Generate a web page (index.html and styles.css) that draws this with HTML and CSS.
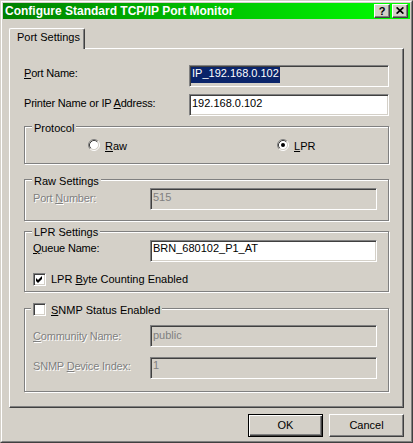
FILE: index.html
```html
<!DOCTYPE html>
<html>
<head>
<meta charset="utf-8">
<title>Configure Standard TCP/IP Port Monitor</title>
<link rel="stylesheet" href="styles.css">
</head>
<body>
<div class="window">
  <div class="frame">
    <div class="titlebar">
      <span class="title">Configure Standard TCP/IP Port Monitor</span>
      <div class="caption-buttons">
        <span class="cap-btn help">?</span>
        <span class="cap-btn close"><svg width="8" height="7" viewBox="0 0 8 7"><path d="M0.6 0.4 L7.4 6.6 M7.4 0.4 L0.6 6.6" stroke="#000" stroke-width="1.7" fill="none"/></svg></span>
      </div>
    </div>
    <div class="client">
      <div class="tabs">
        <div class="tab selected">Port Settings</div>
      </div>
      <div class="sheet">
        <div class="row r-port">
          <span class="lbl main p2"><u>P</u>ort Name:</span>
          <div class="edit wide readonly"><span class="sel">IP_192.168.0.102</span></div>
        </div>
        <div class="row r-printer">
          <span class="lbl main p3">Printer Name or IP <u>A</u>ddress:</span>
          <div class="edit wide t2">192.168.0.102</div>
        </div>

        <div class="group g-protocol">
          <span class="legend">Protocol</span>
          <div class="radios">
            <div class="radio-item first">
              <svg class="radio" width="12" height="12" viewBox="0 0 12 12">
                <circle cx="6" cy="6" r="4.5" fill="#fff"/>
                <path d="M2.11 9.89 A5.5 5.5 0 0 1 9.89 2.11" stroke="#808080" fill="none"/>
                <path d="M9.89 2.11 A5.5 5.5 0 0 1 2.11 9.89" stroke="#fff" fill="none"/>
                <path d="M2.82 9.18 A4.5 4.5 0 0 1 9.18 2.82" stroke="#404040" fill="none"/>
                <path d="M9.18 2.82 A4.5 4.5 0 0 1 2.82 9.18" stroke="#d4d0c8" fill="none"/>
              </svg>
              <span class="rlabel"><u>R</u>aw</span>
            </div>
            <div class="radio-item">
              <svg class="radio" width="12" height="12" viewBox="0 0 12 12">
                <circle cx="6" cy="6" r="4.5" fill="#fff"/>
                <path d="M2.11 9.89 A5.5 5.5 0 0 1 9.89 2.11" stroke="#808080" fill="none"/>
                <path d="M9.89 2.11 A5.5 5.5 0 0 1 2.11 9.89" stroke="#fff" fill="none"/>
                <path d="M2.82 9.18 A4.5 4.5 0 0 1 9.18 2.82" stroke="#404040" fill="none"/>
                <path d="M9.18 2.82 A4.5 4.5 0 0 1 2.82 9.18" stroke="#d4d0c8" fill="none"/>
                <circle cx="6" cy="6" r="2" fill="#000"/>
              </svg>
              <span class="rlabel"><u>L</u>PR</span>
            </div>
          </div>
        </div>

        <div class="group g-raw">
          <span class="legend">Raw Settings</span>
          <div class="row">
            <span class="lbl sub disabled p4">Port <u>N</u>umber:</span>
            <div class="edit narrow disabled t2">515</div>
          </div>
        </div>

        <div class="group g-lpr">
          <span class="legend l6">LPR Settings</span>
          <div class="row">
            <span class="lbl sub p2"><u>Q</u>ueue Name:</span>
            <div class="edit narrow">BRN_680102_P1_AT</div>
          </div>
          <div class="check-row">
            <span class="checkbox"><svg width="11" height="11" viewBox="0 0 11 11"><path d="M2 4 L4 6 L8 2 L8 5 L4 9 L2 7 Z" fill="#000"/></svg></span>
            <span class="clabel">LPR <u>B</u>yte Counting Enabled</span>
          </div>
        </div>

        <div class="group g-snmp">
          <span class="legend check-legend">
            <span class="checkbox"></span>
            <span class="clabel"><u>S</u>NMP Status Enabled</span>
          </span>
          <div class="row">
            <span class="lbl sub disabled p5"><u>C</u>ommunity Name:</span>
            <div class="edit narrow disabled t3">public</div>
          </div>
          <div class="row r-device">
            <span class="lbl sub disabled p3">SNMP <u>D</u>evice Index:</span>
            <div class="edit narrow disabled">1</div>
          </div>
        </div>
      </div>
      <div class="buttons">
        <span class="btn default">OK</span>
        <span class="btn">Cancel</span>
      </div>
    </div>
  </div>
</div>
</body>
</html>
```
FILE: styles.css
```css
* { box-sizing: border-box; }

body {
  margin: 0;
  background: #d4d0c8;
  font-family: "Liberation Sans", Arial, sans-serif;
  font-size: 11px;
  color: #000;
}

u { text-decoration: underline; text-underline-offset: 1px; }

.window {
  width: 413px;
  height: 443px;
  background: #d4d0c8;
  border: 1px solid;
  border-color: #d4d0c8 #404040 #404040 #d4d0c8;
}

.frame {
  height: 100%;
  border: 1px solid;
  border-color: #fff #808080 #808080 #fff;
  padding: 1px;
}

.titlebar {
  height: 16px;
  display: flex;
  align-items: flex-start;
  background: linear-gradient(to right, #008000, #00ff00);
}

.title {
  color: #fff;
  font-weight: bold;
  font-size: 12px;
  line-height: 15px;
  padding: 1px 0 0 2px;
  white-space: nowrap;
}

.caption-buttons {
  margin-left: auto;
  margin-top: 1px;
  margin-right: 2px;
  display: flex;
  gap: 2px;
}

.cap-btn {
  width: 16px;
  height: 14px;
  background: #d4d0c8;
  border: 1px solid;
  border-color: #fff #404040 #404040 #fff;
  box-shadow: inset -1px -1px #808080;
  display: flex;
  align-items: center;
  justify-content: center;
}

.cap-btn.help {
  font-weight: bold;
  font-size: 11px;
  line-height: 12px;
}

.cap-btn.close svg { display: block; margin-top: -1px; }

.client {
  padding: 9px 6px 0 6px;
}

.tabs {
  display: flex;
  height: 20px;
}

.tab {
  position: relative;
  z-index: 1;
  width: 76px;
  height: 21px;
  background: #d4d0c8;
  border-top: 1px solid #fff;
  border-left: 1px solid #fff;
  border-right: 1px solid #404040;
  box-shadow: inset -1px 0 #808080;
  border-top-left-radius: 2px;
  border-top-right-radius: 2px;
  padding: 2px 0 0 7px;
  line-height: 13px;
  white-space: nowrap;
}

.sheet {
  width: 395px;
  height: 360px;
  border: 1px solid;
  border-color: #fff #404040 #404040 #fff;
  box-shadow: inset -1px -1px #808080;
  padding: 16px 0 0 14px;
}

.row {
  display: flex;
  align-items: flex-start;
  height: 22px;
}

.r-printer { margin-top: 7px; }

.lbl {
  line-height: 13px;
  white-space: nowrap;
  letter-spacing: -0.2px;
}
.lbl.main { width: 165px; }
.lbl.sub { width: 117px; }
.p2 { padding-top: 2px; }
.p3 { padding-top: 3px; }
.p4 { padding-top: 4px; }
.p5 { padding-top: 5px; }

.lbl.disabled {
  color: #808080;
  text-shadow: 1px 1px 0 #fff;
}

.edit {
  height: 22px;
  border: 1px solid;
  border-color: #808080 #fff #fff #808080;
  box-shadow: inset 1px 1px #404040, inset -1px -1px #d4d0c8;
  background: #fff;
  padding: 1px 0 0 2px;
  line-height: 13px;
  white-space: nowrap;
  overflow: hidden;
}
.edit.t2 { padding-top: 2px; }
.edit.t3 { padding-top: 3px; }
.edit.wide { width: 200px; }
.edit.narrow { width: 227px; }
.edit.disabled { background: #d4d0c8; color: #808080; }
.edit.readonly { background: #d4d0c8; padding: 0 0 0 1px; }

.sel {
  display: inline-block;
  height: 16px;
  margin-top: 1px;
  line-height: 12px;
  padding: 0 1px;
  background: #0a246a;
  color: #fff;
}

.group {
  position: relative;
  width: 365px;
  border: 1px solid #808080;
  box-shadow: inset 1px 1px #fff, 1px 1px #fff;
  padding-left: 8px;
}

.legend {
  position: absolute;
  top: -5px;
  left: 7px;
  padding: 0 2px;
  background: #d4d0c8;
  line-height: 13px;
  white-space: nowrap;
}
.legend.l6 { top: -6px; }

.g-protocol { margin-top: 10px; height: 38px; padding-top: 12px; }
.g-raw { margin-top: 15px; height: 42px; padding-top: 8px; }
.g-lpr { margin-top: 10px; height: 61px; padding-top: 8px; }
.g-snmp { margin-top: 16px; height: 84px; padding-top: 16px; }

.radios { display: flex; }
.radio-item { display: flex; align-items: flex-start; }
.radio-item.first { width: 189px; margin-left: 55px; }
.radio { display: block; flex: none; }
.rlabel { margin-left: 5px; line-height: 13px; padding-top: 1px; }

.check-row {
  display: flex;
  align-items: flex-start;
  margin-top: 11px;
}

.checkbox {
  flex: none;
  width: 13px;
  height: 13px;
  background: #fff;
  border: 1px solid;
  border-color: #808080 #fff #fff #808080;
  box-shadow: inset 1px 1px #404040, inset -1px -1px #d4d0c8;
}
.checkbox svg { display: block; }

.clabel {
  margin-left: 5px;
  line-height: 13px;
  white-space: nowrap;
}

.check-legend {
  top: -6px;
  left: 6px;
  display: flex;
  align-items: flex-start;
}
.check-legend .clabel { padding-top: 1px; }

.r-device { margin-top: 10px; }

.buttons {
  display: flex;
  justify-content: flex-end;
  gap: 6px;
  margin-top: 6px;
}

.btn {
  width: 75px;
  height: 23px;
  border: 1px solid;
  border-color: #fff #404040 #404040 #fff;
  box-shadow: inset -1px -1px #808080;
  text-align: center;
  line-height: 21px;
}

.btn.default {
  border: 1px solid #000;
  box-shadow: inset 1px 1px #fff, inset -1px -1px #404040, inset -2px -2px #808080;
}
```
